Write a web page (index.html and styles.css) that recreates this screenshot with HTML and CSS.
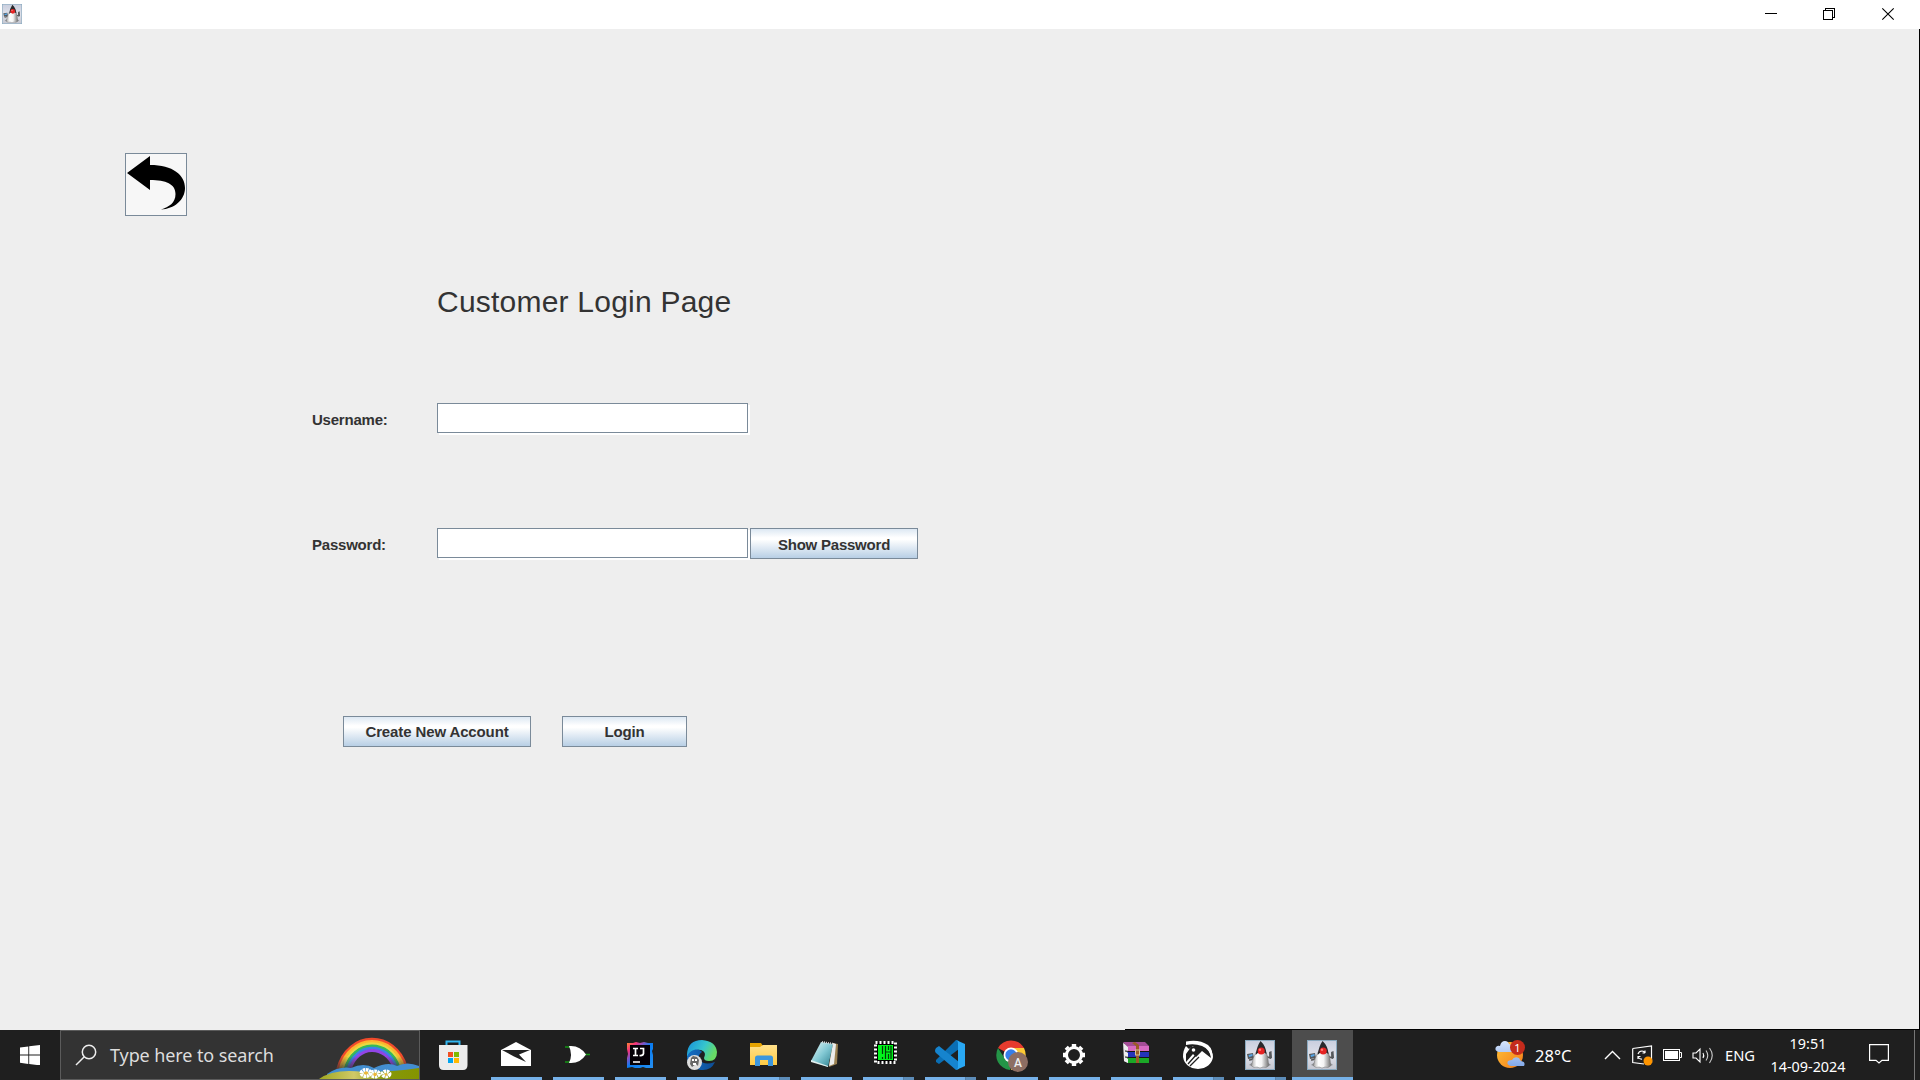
FILE: index.html
```html
<!DOCTYPE html>
<html lang="en">
<head>
<meta charset="utf-8">
<title>Customer Login Page</title>
<link rel="stylesheet" href="styles.css">
</head>
<body>
<svg class="defs" width="0" height="0">
  <defs>
    <linearGradient id="dukeBg" x1="0" y1="0" x2="0" y2="1"><stop offset="0" stop-color="#c9cede"/><stop offset=".5" stop-color="#dfe1ea"/><stop offset="1" stop-color="#c4c6d0"/></linearGradient>
    <linearGradient id="dukeBody" x1="0" y1="0" x2="1" y2="0"><stop offset="0" stop-color="#aaa"/><stop offset=".3" stop-color="#fff"/><stop offset=".6" stop-color="#f4f4f4"/><stop offset="1" stop-color="#777"/></linearGradient>
    <symbol id="duke" viewBox="0 0 30 30">
      <rect x=".5" y=".5" width="29" height="29" fill="url(#dukeBg)" stroke="#8aa9bf"/>
      <path d="M2 14L8 13L9 18L3 19Z" fill="#55585c"/><path d="M3.500 15L7.500 14L7.500 16L4 17Z" fill="#55a6e8"/>
      <path d="M4 20Q8 20 12 15M20 16L25 18L25 13" fill="none" stroke="#555" stroke-width="1.500"/>
      <path d="M24 12L26.500 11L27 18L25 19Z" fill="#55585c"/>
      <path d="M4 25Q15 30 26 25L22 22H8Z" fill="#8d8f94"/>
      <path d="M11 12Q7.500 18 6.500 26Q9 28.500 12 27Q15 29 18 27Q21 28.500 23.500 26Q23.500 17 21 12Z" fill="url(#dukeBody)" stroke="#777" stroke-width=".5"/>
      <path d="M15.500 1Q21 6 21.500 14Q19 12 16 12Q13 12 10.500 15Q12 6 15.500 1Z" fill="#29292c"/>
      <circle cx="16.2" cy="11" r="3.5" fill="#e52222"/><circle cx="15" cy="9.7" r="1.2" fill="#ff7770"/>
    </symbol>
  </defs>
</svg>

<div class="screen">
  <header class="titlebar">
    <svg class="app-icon" width="20" height="20"><use href="#duke"/></svg>
    <div class="window-controls">
      <svg width="58" height="28" shape-rendering="crispEdges"><path d="M20 13.5H32" stroke="#000"/></svg>
      <svg width="58" height="28" shape-rendering="crispEdges"><path d="M20.5 10.5H29.5V19.5H20.5ZM22.5 10V8.5H31.5V17.5H30" fill="none" stroke="#000"/></svg>
      <svg width="58" height="28"><path d="M21.3 8.3L32.7 19.7M32.7 8.3L21.3 19.7" stroke="#000" stroke-width="1.1"/></svg>
    </div>
  </header>

  <main class="window">
    <button class="back" aria-label="Back">
      <svg width="60" height="61" viewBox="0 0 60 61"><path d="M1 19L24 2V11C47 11 59 21 59 34C59 46 48 55 35 55.500C43 53 49.500 49 49.500 40C49.500 30 40 26 24 26V36Z"/></svg>
    </button>
    <h1 class="heading">Customer Login Page</h1>
    <form class="login">
      <div class="row">
        <label for="user">Username:</label>
        <input class="field" id="user" type="text">
      </div>
      <div class="row">
        <label for="pass">Password:</label>
        <input class="field" id="pass" type="password">
        <button class="btn show" type="button">Show Password</button>
      </div>
      <div class="actions">
        <button class="btn create" type="button">Create New Account</button>
        <button class="btn submit" type="button">Login</button>
      </div>
    </form>
  </main>

  <footer class="taskbar">
    <div class="start"><svg width="20" height="20" viewBox="0 0 20 20" fill="#fff"><path d="M0 2.6L8.3 1.4V9.4H0ZM9.2 1.3L20 0V9.4H9.2ZM0 10.4H8.3V18.9L0 17.7ZM9.2 10.4H20V20.4L9.2 19Z"/></svg></div>
    <div class="search">
      <svg class="lens" width="22" height="22" viewBox="0 0 22 22" fill="none" stroke="#eee" stroke-width="1.5"><circle cx="14" cy="8" r="6.7"/><path d="M9.3 12.7L1 21"/></svg>
      <span>Type here to search</span>
      <svg class="rainbow" width="100" height="49" viewBox="0 0 100 49">
        <defs>
          <linearGradient id="hill" x1="0" x2="1" y1="0" y2="0"><stop offset="0" stop-color="#a0a81f"/><stop offset=".35" stop-color="#d0c968"/><stop offset=".65" stop-color="#87980a"/><stop offset="1" stop-color="#849400"/></linearGradient>
          <linearGradient id="fade" x1="0" x2="0" y1="0" y2="1"><stop offset=".65" stop-color="#fff"/><stop offset="1" stop-color="#333"/></linearGradient>
          <mask id="ends"><rect width="100" height="38" fill="url(#fade)"/></mask>
        </defs>
        <g fill="none" stroke-width="2.8" mask="url(#ends)" transform="translate(1.500 1.500)">
          <path d="M17 38C27 -2 75 -2 86 36" stroke="#f04b2b"/><path d="M19.500 38C29 1 73 1 83.500 36" stroke="#ffb52e"/><path d="M22 38C31 4 71 4 81 36" stroke="#e9d842"/><path d="M24.500 38C33 7 69 7 78.500 36" stroke="#35b95b"/><path d="M27 38C35 10 67 10 76 36" stroke="#3d82e8"/><path d="M29.500 38C37 13 65 13 73.500 36" stroke="#9145e8"/>
        </g>
        <path d="M8 44Q20 36 32 38Q45 32 55 38Q69 31 78 36Q88 31 100 36V49H8Z" fill="#438ed0"/>
        <path d="M0 49Q15 38 45 42Q75 42 100 38V49Z" fill="url(#hill)"/>
        <g fill="none" stroke="#fff" stroke-width="4" stroke-dasharray="2.300 .600"><ellipse cx="47" cy="43" rx="4.500" ry="3"/><ellipse cx="56" cy="44" rx="4" ry="2.500"/><ellipse cx="67" cy="44" rx="3.500" ry="2.500"/></g>
        <g fill="#efb638"><circle cx="47" cy="43" r="1.800"/><circle cx="56" cy="44.500" r="1.700"/><circle cx="67" cy="44.500" r="1.300"/></g>
      </svg>
    </div>

    <nav class="apps">
      <div class="app store"><svg width="30" height="30" viewBox="0 0 30 30"><path d="M8.500 6V1.500H21.500V6" fill="none" stroke="#31b6f0" stroke-width="2"/><path d="M1 5H29.500V25Q29.500 30 25 30H5.500Q1 30 1 25Z" fill="#ececec"/><path d="M10 12h5v5h-5z" fill="#f25022"/><path d="M16 12h5v5h-5z" fill="#7fba00"/><path d="M10 18h5v5h-5z" fill="#00a4ef"/><path d="M16 18h5v5h-5z" fill="#ffb900"/></svg></div>
      <div class="app open"><svg width="30" height="30" viewBox="0 0 30 30"><path d="M0 10L15 2L30 10V26H0Z" fill="#fff"/><path d="M1 10H29L18 14.500L25 22L13 16.500Z" fill="#202020"/></svg></div>
      <div class="app open or-gate"><svg width="30" height="30" viewBox="0 0 30 30"><path d="M1 7H8M1 22H8M20 14.500H26" stroke="#159515" stroke-width="1.600"/><path d="M5 6Q16 5 22 14.500Q16 24 5 23Q9 15 5 6Z" fill="#fff"/></svg></div>
      <div class="app open"><svg width="30" height="30" viewBox="0 0 30 30">
        <defs><linearGradient id="ij" x1="0" y1="0" x2="1" y2="1"><stop offset="0" stop-color="#fc8b2d"/><stop offset=".2" stop-color="#f5327d"/><stop offset=".35" stop-color="#7957c9"/><stop offset=".5" stop-color="#087cf2"/><stop offset="1" stop-color="#268ff0"/></linearGradient></defs>
        <path d="M2 3H8L11 2L15 3L19 2L23 3H28V9L27 11L28 15V28H21L18 27L15 28H10L7 27L2 28V18L3 14L2 9Z" fill="url(#ij)"/><rect x="5" y="5" width="20" height="20" fill="#050007"/><path d="M8 8.500H13M10.500 8.500V15.500M8 15.500H13M15 8.500H18.500V13.500Q18 16 14.500 15.500M8 22H15" fill="none" stroke="#fff" stroke-width="1.700"/></svg></div>
      <div class="app open"><svg width="30" height="30" viewBox="0 0 30 30">
        <defs><linearGradient id="edge" x1="0" x2="1" y1="0" y2=".4"><stop offset="0" stop-color="#168fda"/><stop offset=".6" stop-color="#36c5cd"/><stop offset="1" stop-color="#68dc65"/></linearGradient><linearGradient id="edgeLow" x1="0" x2="1"><stop stop-color="#126dc4"/><stop offset="1" stop-color="#0d4c94"/></linearGradient></defs>
        <path d="M0 14Q1 0 15 0Q29 1 30 12Q30 21 22 21Q17 21 17 18Q20 12 14 10Q6 8 0 17Z" fill="url(#edge)"/><path d="M0 17C3 8 13 8 15 12Q10 15 13 20Q17 26 28 22Q24 31 14 30Q0 28 0 17Z" fill="url(#edgeLow)"/><circle cx="7.500" cy="22.500" r="7.500" fill="#ddd"/><path d="M4 18L6 16L10 17L12 20L11 26L9 24L5 27L3 24Z" fill="#666"/><path d="M5 19H7V21H5ZM8 19H10V21H8ZM6 23H9V25H6Z" fill="#fff"/></svg></div>
      <div class="app open multi"><svg width="30" height="30" viewBox="0 0 30 30"><defs><linearGradient id="folder" x1="0" y1="0" x2="0" y2="1"><stop stop-color="#ffe08a"/><stop offset="1" stop-color="#ffcb45"/></linearGradient></defs><path d="M1 3H12L14 6V10H1Z" fill="#e6a300"/><path d="M1 7H11L14 5H28V25H1Z" fill="url(#folder)"/><path d="M6 26V18Q6 15.500 8.500 15.500H21.500Q24 15.500 24 18V26H19V20H11V26Z" fill="#3c96dd"/></svg></div>
      <div class="app open"><svg width="30" height="30" viewBox="0 0 30 30"><defs><linearGradient id="pad" x1="0" y1="0" x2="1" y2="1"><stop stop-color="#eafafa"/><stop offset=".5" stop-color="#83c9d4"/><stop offset="1" stop-color="#297d8d"/></linearGradient></defs><path d="M21 3L27 4L26 24L18 27Z" fill="#9b8253"/><path d="M22 3L25 4L23 24L18 26Z" fill="#ececec"/><path d="M10 2L22 4L17 27L0 21Z" fill="url(#pad)"/><path d="M0 20L17 26V27L0 22Z" fill="#e1eeee"/><path d="M11 2L23 4" stroke="#d8d8d8" stroke-width="2" stroke-dasharray="1 1"/></svg></div>
      <div class="app open multi chip"><svg width="30" height="30" viewBox="0 0 30 30"><rect x="4.500" y="2.500" width="20" height="20" fill="#000" stroke="#fff" stroke-width="3" stroke-dasharray="2 2"/><path d="M6 4H23V21H6Z" fill="#000"/><path d="M7 5H22V20H7Z" fill="#00f41b"/><path d="M11.500 6V14M11.500 17V19M14.500 6V19M14.500 12H20M20 6V19M17.500 6V10M17.500 14V19" fill="none" stroke="#023b08" stroke-width="1.200"/></svg></div>
      <div class="app open multi"><svg width="30" height="30" viewBox="0 0 30 30"><path d="M1 20L21 0L24 1V9L4 24L1 22Z" fill="#0a6eb4"/><path d="M1 8L4 6L24 22V29L21 30L1 13Q-1 11 1 8Z" fill="#1684ce"/><path d="M21 0L30 4V26L21 30Q23 29 23 27V3Q23 1 21 0Z" fill="#29a8f4"/></svg></div>
      <div class="app open"><svg width="32" height="32" viewBox="0 0 32 32"><path d="M15 15L2 8A15 15 0 0 1 28 8Z" fill="#e63b2e"/><path d="M15 15V8H28A15 15 0 0 1 15 30Z" fill="#fcc934"/><path d="M2 8L9 19L16 22L14 30A15 15 0 0 1 2 8Z" fill="#249447"/><circle cx="15" cy="15" r="7.500" fill="#fff"/><circle cx="15" cy="15" r="5.700" fill="#367ee9"/><circle cx="22" cy="22" r="10" fill="#8d6e63"/><text x="22" y="26.500" text-anchor="middle" fill="#eee" font-size="12" font-weight="500" font-family="Roboto, sans-serif">A</text></svg></div>
      <div class="app open gear"><svg width="26" height="26" viewBox="-13 -13 26 26"><circle r="7.500" fill="none" stroke="#fff" stroke-width="3"/><path d="M0-11V-8M0 11V8M-11 0H-8M11 0H8M-7.800-7.800L-6-6M7.800 7.800L6 6M7.800-7.800L6-6M-7.800 7.800L-6 6" stroke="#fff" stroke-width="4.400"/></svg></div>
      <div class="app open"><svg width="30" height="30" viewBox="0 0 30 30"><path d="M2 3L7 5V23L3 21Z" fill="#ddd"/><path d="M2 2L24 2L28 6L7 8Z" fill="#a34d96"/><path d="M7 6H28V11H7Z" fill="#d76ac2"/><path d="M5 12H28V17H7Z" fill="#2434ba"/><path d="M5 18H28V23H7Z" fill="#1ba827"/><path d="M3 4L7 7V12L3 9ZM3 10L7 13V17L3 15ZM3 16L7 19V23L3 21Z" fill="#eee"/><path d="M4 11L8 11.500H28M4 17L8 17.500H28" fill="none" stroke="#151515"/><path d="M14 2L18 5V23H15V6L11 3Z" fill="#9a5c27"/><rect x="14.500" y="10" width="4" height="5" fill="none" stroke="#d6c39c"/></svg></div>
      <div class="app open multi"><svg width="30" height="30" viewBox="0 0 30 30"><path d="M3 6Q0 10 0 17Q2 28 15 29Q28 28 30 17Q30 14 28 10L22 6H10L6 9Z" fill="#fff"/><path d="M3 14L8 7Q14 4 21 6Q27 9 28 18L19 11L13 17L10 14L3 22Z" fill="#202020"/><path d="M5 24L13 15M7 26L16 17" stroke="#202020" stroke-width="1.300"/><path d="M3 1.500Q16-1 25 5Q31 10 29 20Q27 9 19 6Q11 3 3 5Z" fill="#fff"/><circle cx="10.500" cy="10" r="1.800" fill="#fff"/></svg></div>
      <div class="app open multi"><svg width="30" height="30"><use href="#duke"/></svg></div>
      <div class="app open active"><svg width="30" height="30"><use href="#duke"/></svg></div>
    </nav>

    <div class="tray">
      <svg class="weather" width="31" height="29" viewBox="0 0 31 29"><defs><linearGradient id="sun" x1="0" y1="0" x2="1" y2="1"><stop stop-color="#ffc438"/><stop offset="1" stop-color="#f47a18"/></linearGradient><linearGradient id="cloud" x1="0" y1="0" x2="0" y2="1"><stop stop-color="#d7e6fd"/><stop offset="1" stop-color="#83a9e8"/></linearGradient></defs><circle cx="15" cy="15" r="13" fill="url(#sun)"/><path d="M4 12Q-1 11 1 7Q3 5 5 6Q6 1 10 1Q13 1 14 4Q19 5 18 12ZM16 26Q11 25 13 21Q15 20 17 20Q19 16 24 18Q25 20 26 21Q31 22 29 26Z" fill="url(#cloud)"/><circle cx="22.500" cy="7.500" r="7.500" fill="#c42b1c"/><text x="22.500" y="11.500" text-anchor="middle" fill="#fff" font-size="11" font-family="Noto Sans, sans-serif">1</text></svg>
      <span class="temp">28°C</span>
      <svg class="chevron" width="17" height="10" fill="none" stroke="#fff" stroke-width="1.400"><path d="M1 9L8.500 1.500L16 9"/></svg>
      <svg class="sync" width="21" height="21" viewBox="0 0 21 21" fill="none" stroke="#fff" stroke-width="1.200"><path d="M.700 3.500L19.500 1V18M.700 3.500V17.500L12 19"/><path d="M6 9Q7 6 10 6Q12 6 13 8V5.500M13 8H10.500M6 14V11.500H8.500M6 12Q8 14.500 10 14"/><circle cx="16" cy="16" r="4.500" fill="#ff9500" stroke="none"/></svg>
      <svg class="battery" width="20" height="12" fill="none" stroke="#fff"><rect x=".500" y=".500" width="16" height="11"/><rect x="2" y="2" width="13" height="8" fill="#fff" stroke="none"/><path d="M16.500 3.500H18.500V8.500H16.500"/></svg>
      <svg class="volume" width="22" height="19" viewBox="0 0 22 19" fill="none" stroke="#fff" stroke-width="1.100"><path d="M1 7H4L8 3V16L4 12H1Z"/><path d="M11 7Q12.500 9.500 11 12"/><path d="M14 4.500Q17.500 9.500 14 14.500M17.500 2Q23 9.500 17.500 17" stroke="#ccc"/></svg>
      <span class="lang">ENG</span>
      <div class="clock"><span>19:51</span><span>14-09-2024</span></div>
      <svg class="notice" width="20" height="21" fill="none" stroke="#fff" stroke-width="1.200"><path d="M.600 1.600H19.400V17.400H13L10 20L7 17.400H.600Z"/></svg>
      <i class="peek"></i>
    </div>
  </footer>
</div>
</body>
</html>
```
FILE: styles.css
```css
* { box-sizing: border-box; }
body { margin: 0; overflow: hidden; background: #eee; }
svg { display: block; flex: none; }
.defs { position: absolute; }
.screen { width: 1920px; height: 1080px; display: flex; flex-direction: column; font-family: "Liberation Sans", Arial, sans-serif; }

.titlebar { height: 29px; flex: none; display: flex; justify-content: space-between; background: #fff; }
.app-icon { margin: 4px 0 0 2px; }
.app-icon use { transform: scale(1); }
.window-controls { display: flex; padding-right: 1px; }

.window { height: 1001px; flex: none; padding: 124px 0 0 125px; background: linear-gradient(#000, #000) 1125px 100% / 795px 1px no-repeat, #eee; border-right: 1px solid #000; }
.back { display: block; width: 62px; height: 63px; padding: 0; border: 1px solid #7a8a99; background: #f7f7f7; }
.heading { margin: 66px 0 0 312px; height: 40px; font-size: 30px; line-height: 40px; font-weight: 400; color: #333; letter-spacing: .22px; white-space: nowrap; }
.login { margin-left: 187px; padding-top: 81px; }
.row { display: flex; height: 32px; margin-bottom: 93px; }
.row label { width: 125px; padding-top: 1px; font-size: 15px; line-height: 31px; font-weight: 700; color: #333; letter-spacing: -.22px; }
.field { width: 311px; height: 30px; margin-right: 2px; padding: 0 4px; border: 1px solid #7a8a99; border-radius: 0; background: #fff; box-shadow: 2px 2px #fff; outline: 0; }
.btn { height: 31px; padding: 1px 0 0; border: 1px solid #7a8a99; border-radius: 0; background: linear-gradient(#dde8f3, #fff 30%, #fff 36%, #b8cfe5); color: #333; font: 700 15px/28px "Liberation Sans", Arial, sans-serif; letter-spacing: -.12px; position: relative; }
.show { width: 168px; padding-top: 2px; letter-spacing: -.22px; }
.actions { display: flex; gap: 31px; padding: 63px 0 0 31px; }
.create { width: 188px; }
.submit { width: 125px; }

.taskbar { height: 50px; display: flex; background: #1f1f1f; color: #fff; font-family: "Noto Sans", "Open Sans", sans-serif; }
.start { width: 60px; padding: 15px 0 0 20px; }
.search { width: 360px; display: flex; align-items: center; border: 1px solid #5b5b5b; background: #333; color: #ddd; font-size: 18px; letter-spacing: -.1px; white-space: nowrap; }
.lens { margin: 0 13px 1px 14px; }
.search span { flex: 1; }
.rainbow { align-self: flex-end; }
.apps { display: flex; padding-left: 4px; }
.app { width: 62px; height: 50px; padding-top: 10px; display: grid; grid-template-rows: 37px 3px; justify-items: center; }
.app > svg { overflow: visible; margin-right: 3px; }
.store > svg { margin-right: 5px; }
.or-gate > svg { margin-right: 0; }
.chip > svg { margin-right: 6px; }
.gear > svg { margin-top: 2px; }
.open::after { content: ""; width: 51px; height: 3px; margin-right: 1px; background: #76b1e8; }
.multi::after { background: linear-gradient(90deg, #76b1e8 40px, #4d7193 40px, #5d8db9 41px); }
.active { width: 61px; background: #4d4d4d; }
.active > svg { margin-right: 1px; }
.active::after { width: 61px; margin: 0; }

.tray { flex: 1; display: flex; align-items: center; padding-left: 142px; white-space: nowrap; }
.weather { margin-bottom: 2px; }
.temp { width: 69px; margin-left: 9px; font-size: 16.5px; }
.chevron { margin-right: 11px; }
.sync { margin-right: 10px; }
.battery { margin-right: 9px; }
.volume { margin-right: 11px; }
.lang { width: 45px; font-size: 14.7px; }
.clock { width: 76px; display: flex; flex-direction: column; align-items: center; font-size: 14.4px; line-height: 23px; padding-bottom: 1px; }
.notice { margin: 0 0 3px 23px; }
.peek { width: 1px; height: 50px; margin-left: 25px; background: #777; }
```
